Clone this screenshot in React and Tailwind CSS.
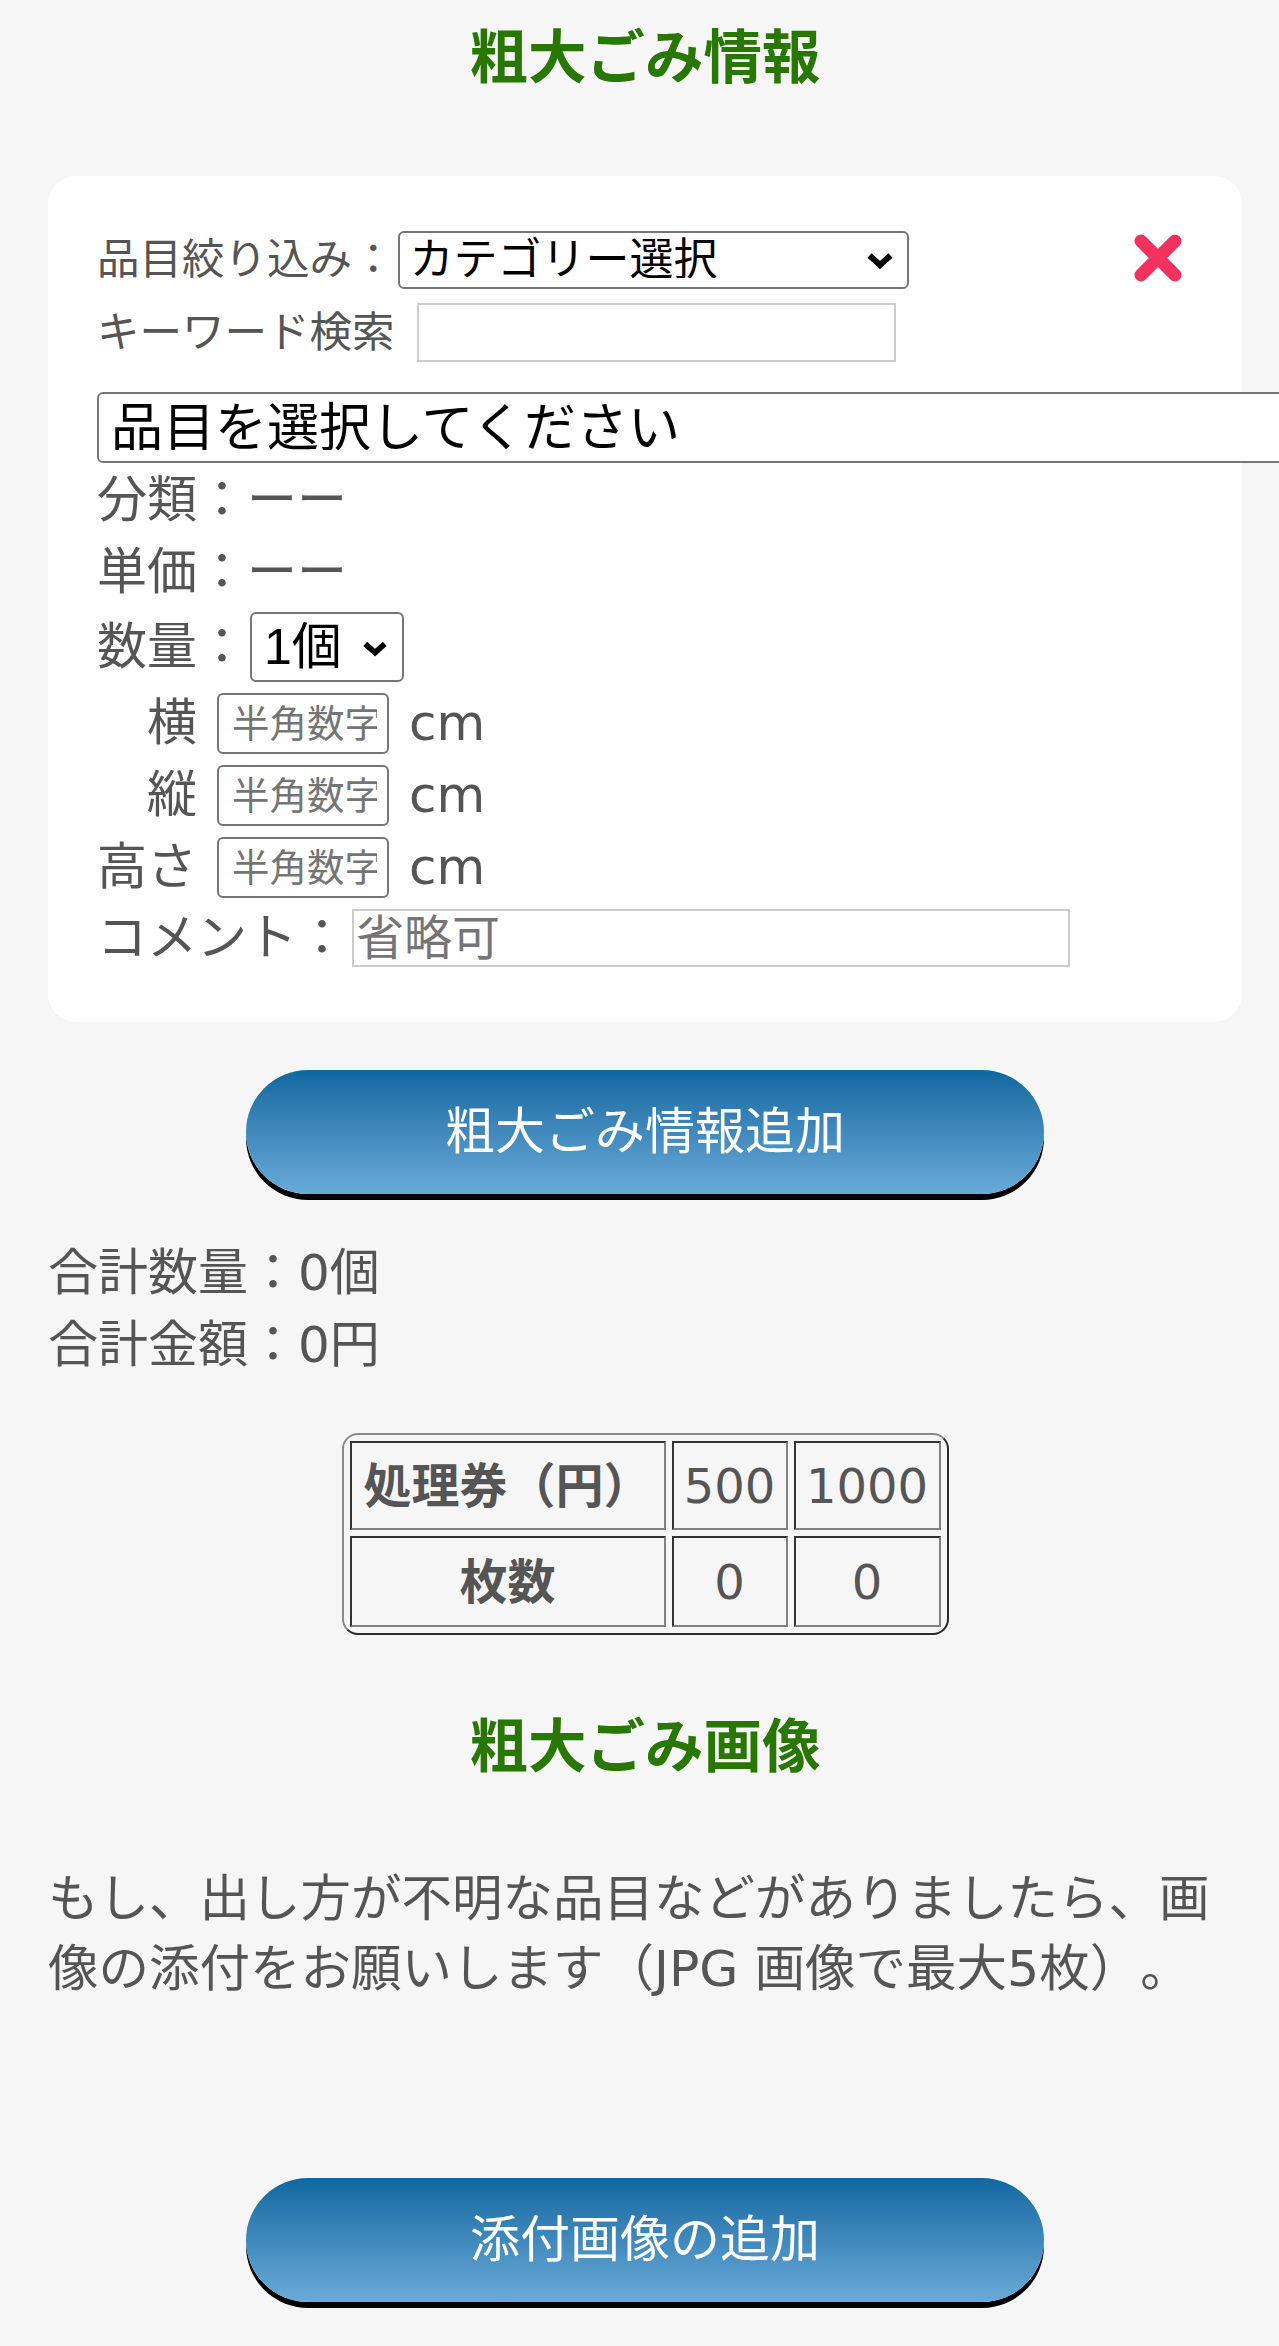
import React from "react";

const FONT = "font-['DejaVu_Sans','Noto_Sans_CJK_JP',sans-serif]";
const SELECT_FONT = "font-['Liberation_Sans','Noto_Sans_CJK_JP',sans-serif]";
const CJK_SELECT_FONT = "font-['Noto_Sans_CJK_JP',sans-serif]";

const Chevron = ({ className }) => (
  <svg viewBox="0 0 28 17" fill="none" className={className}>
    <path d="M3.5 3.5 L14 13 L24.5 3.5" stroke="#000" strokeWidth="6" />
  </svg>
);

const CloseIcon = () => (
  <svg viewBox="0 0 48 48" className="h-[48px] w-[48px]">
    <path d="M7 7 L41 41 M41 7 L7 41" stroke="#f2315f" strokeWidth="13" strokeLinecap="round" />
  </svg>
);

const SizeRow = ({ label }) => (
  <div className="mt-[11px] flex h-[61px] items-center">
    <span className="w-[100px] text-right">{label}</span>
    <input
      type="text"
      placeholder="半角数字"
      className="ml-[20px] h-[61px] w-[172px] rounded-[6px] border-2 border-[#767676] bg-white pl-[13px] pr-[10px] text-[37.5px] placeholder:text-[#757575] outline-none"
    />
    <span className="ml-[20px]">cm</span>
  </div>
);

const PillButton = ({ children, className = "" }) => (
  <button
    className={`mx-auto flex h-[124px] w-[798px] items-center justify-center rounded-full bg-linear-to-b from-[#0d68a0] to-[#68abd9] text-[50px] text-white shadow-[0_6px_0_#000] ${className}`}
  >
    {children}
  </button>
);

const cell = "border-2 border-t-[#333] border-l-[#333] border-b-[#808080] border-r-[#808080]";

export default function App() {
  return (
    <div
      lang="ja"
      className={`min-h-[2346px] overflow-hidden bg-[#f6f6f6] text-[#555] [text-spacing-trim:space-all] ${FONT}`}
    >
      <div className="ml-[48px] w-[1194px] pt-[16px] pb-[38px] text-[50px]">
        <h3 className="h-[84px] text-center text-[58.5px] font-bold leading-[84px] text-[#277700]">
          粗大ごみ情報
        </h3>

        {/* input card */}
        <div className="relative mt-[76px] rounded-[28px] bg-white pb-[55px] pl-[49px] pt-[55px]">
          <button className="absolute right-[60px] top-[58px]">
            <CloseIcon />
          </button>

          <div className="flex h-[58px] items-center">
            <span className="text-[42.5px]">品目絞り込み：</span>
            <div className="relative ml-[3px] h-[58px] w-[511px]">
              <select
                className={`block h-full w-full appearance-none rounded-[6px] border-2 border-[#767676] bg-white pt-0 pb-[8px] pl-[10px] text-[44px] leading-[44px] text-black ${CJK_SELECT_FONT}`}
              >
                <option>カテゴリー選択</option>
              </select>
              <Chevron className="pointer-events-none absolute right-[15px] top-[21px] h-[17px] w-[28px]" />
            </div>
          </div>

          <div className="mt-[14px] flex h-[59px] items-center">
            <span className="text-[42.5px]">キーワード検索</span>
            <input type="text" className="ml-[22px] h-[59px] w-[479px] border-2 border-[#cccccc] bg-white outline-none" />
          </div>

          <select
            className={`mt-[30px] block h-[71px] w-[1300px] appearance-none rounded-[6px] border-2 border-[#767676] bg-white pt-0 pb-[8px] pl-[12px] text-[52px] leading-[52px] text-black ${CJK_SELECT_FONT}`}
          >
            <option>品目を選択してください</option>
          </select>

          <div className="mt-[1px] flex h-[72px] items-center">分類：ーー</div>
          <div className="flex h-[72px] items-center">単価：ーー</div>

          <div className="mt-[4px] flex h-[70px] items-center">
            <span>数量：</span>
            <div className="relative ml-[3px] h-[70px] w-[154px]">
              <select
                className={`block h-full w-full appearance-none rounded-[6px] border-2 border-[#767676] bg-white py-0 pl-[12px] text-[50px] leading-[50px] text-black ${SELECT_FONT}`}
              >
                <option>1個</option>
              </select>
              <Chevron className="pointer-events-none absolute right-[16px] top-[28px] h-[17px] w-[26px]" />
            </div>
          </div>

          <SizeRow label="横" />
          <SizeRow label="縦" />
          <SizeRow label="高さ" />

          <div className="mt-[11px] flex h-[58px] items-center">
            <span>コメント：</span>
            <input
              type="text"
              placeholder="省略可"
              className="ml-[5px] h-[58px] w-[718px] border-2 border-[#cccccc] bg-white pl-[2px] text-[48px] placeholder:text-[#757575] outline-none"
            />
          </div>
        </div>

        <PillButton className="mt-[48px]">粗大ごみ情報追加</PillButton>

        <div className="mt-[43px] leading-[72px]">
          <p>合計数量：0個</p>
          <p>合計金額：0円</p>
        </div>

        <table className="mx-auto mt-[52px] border-separate border-spacing-[6px] rounded-[16px] border-2 border-t-[#8a8a8a] border-l-[#8a8a8a] border-b-[#2a2a2a] border-r-[#2a2a2a] text-[48px]">
          <tbody>
            <tr>
              <th className={`h-[89px] w-[316px] px-[4px] font-bold ${cell}`}>処理券（円）</th>
              <td className={`w-[116px] text-center ${cell}`}>500</td>
              <td className={`w-[147px] text-center ${cell}`}>1000</td>
            </tr>
            <tr>
              <th className={`h-[91px] font-bold ${cell}`}>枚数</th>
              <td className={`text-center ${cell}`}>0</td>
              <td className={`text-center ${cell}`}>0</td>
            </tr>
          </tbody>
        </table>

        <h3 className="mt-[70px] h-[84px] text-center text-[58.5px] font-bold leading-[84px] text-[#277700]">
          粗大ごみ画像
        </h3>

        <p className="mt-[75px] text-[50.5px] leading-[70px]">
          もし、出し方が不明な品目などがありましたら、画像の添付をお願いします（JPG 画像で最大5枚）。
        </p>

        <PillButton className="mt-[174px]">添付画像の追加</PillButton>
      </div>
    </div>
  );
}
